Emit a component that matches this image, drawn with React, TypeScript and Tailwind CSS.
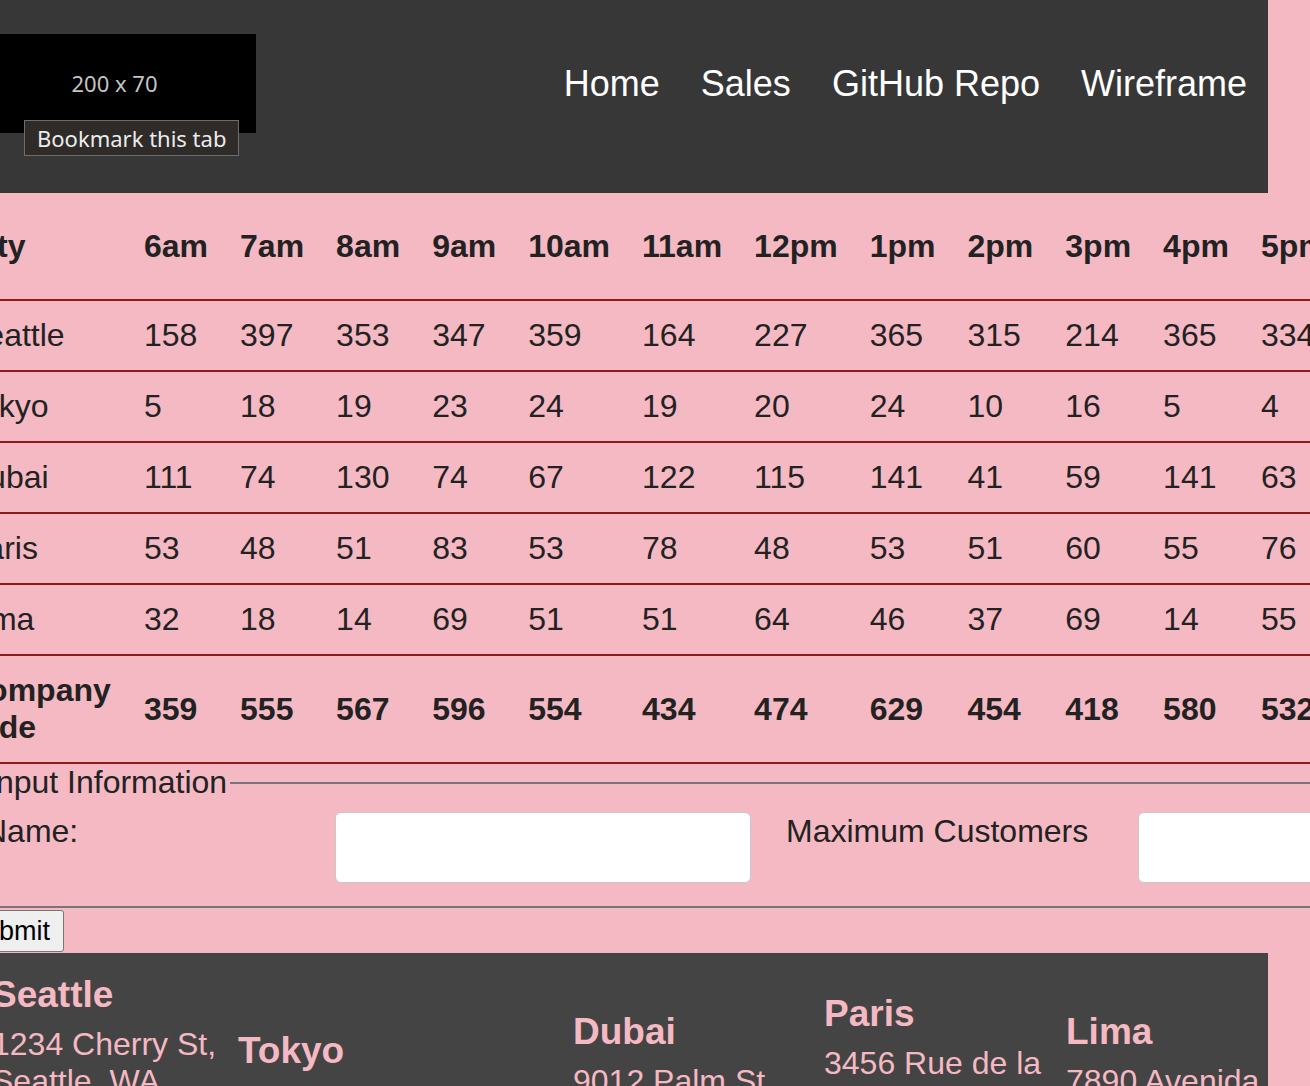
const hours = ["6am", "7am", "8am", "9am", "10am", "11am", "12pm", "1pm", "2pm", "3pm", "4pm", "5pm", "6pm", "7pm"];

const stores = [
  { city: "Seattle", sales: [158, 397, 353, 347, 359, 164, 227, 365, 315, 214, 365, 334, 281, 199] },
  { city: "Tokyo", sales: [5, 18, 19, 23, 24, 19, 20, 24, 10, 16, 5, 4, 12, 21] },
  { city: "Dubai", sales: [111, 74, 130, 74, 67, 122, 115, 141, 41, 59, 141, 63, 88, 97] },
  { city: "Paris", sales: [53, 48, 51, 83, 53, 78, 48, 53, 51, 60, 55, 76, 42, 67] },
  { city: "Lima", sales: [32, 18, 14, 69, 51, 51, 64, 46, 37, 69, 14, 55, 28, 40] },
];

const locations = [
  { city: "Seattle", lines: ["1234 Cherry St,", "Seattle, WA", "98101", "USA"], w: "w-[233px]" },
  { city: "Tokyo", lines: ["5678 Sakura St"], w: "w-[322px]" },
  { city: "Dubai", lines: ["9012 Palm St,", "Dubai, UAE"], w: "w-[238px]" },
  { city: "Paris", lines: ["3456 Rue de la", "Paix, Paris,", "France"], w: "w-[229px]" },
  { city: "Lima", lines: ["7890 Avenida", "Lima"], w: "w-[200px]" },
];

function Header() {
  return (
    <header className="flex items-center justify-between bg-[#373737] pt-[34px] pb-[60px] pl-[33px] pr-[21px]">
      <div className="relative">
        <div className="flex h-[99px] w-[283px] items-center justify-center bg-black font-['Noto_Sans',sans-serif] text-[22px] text-[#c4c4c4]">
          200 x 70
        </div>
        <div className="absolute left-[51px] top-[86px] whitespace-nowrap border border-[#6e6e6e] bg-[#2e2b28] px-[12px] py-[2px] font-['Noto_Sans',sans-serif] text-[22px] leading-[30px] text-[#ececec]">
          Bookmark this tab
        </div>
      </div>
      <nav>
        <ul className="flex gap-[41px] text-[36px] leading-[41px] text-white">
          <li>Home</li>
          <li>Sales</li>
          <li>GitHub Repo</li>
          <li>Wireframe</li>
        </ul>
      </nav>
    </header>
  );
}

function SalesTable() {
  const totals = hours.map((_, i) => stores.reduce((sum, s) => sum + s.sales[i], 0));
  const grand = totals.reduce((a, b) => a + b, 0);
  return (
    <table className="ml-[9px] w-max border-collapse text-left text-[32px] leading-[37px] text-[#222]">
      <thead>
        <tr className="border-b-2 border-[#8e1a1a]">
          <th className="w-[179px] px-[16px] pt-[35px] pb-[34px] font-bold">City</th>
          {hours.map((h) => (
            <th key={h} className="px-[16px] pt-[35px] pb-[34px] font-bold">
              {h}
            </th>
          ))}
          <th className="px-[16px] pt-[35px] pb-[34px] font-bold">Daily Location Total</th>
        </tr>
      </thead>
      <tbody>
        {stores.map((s) => (
          <tr key={s.city} className="border-b-2 border-[#8e1a1a]">
            <td className="p-[16px]">{s.city}</td>
            {s.sales.map((n, i) => (
              <td key={i} className="p-[16px]">
                {n}
              </td>
            ))}
            <td className="p-[16px]">{s.sales.reduce((a, b) => a + b, 0)}</td>
          </tr>
        ))}
        <tr className="border-b-2 border-[#8e1a1a] font-bold">
          <td className="p-[16px]">Company wide</td>
          {totals.map((n, i) => (
            <td key={i} className="p-[16px]">
              {n}
            </td>
          ))}
          <td className="p-[16px]">{grand}</td>
        </tr>
      </tbody>
    </table>
  );
}

function StoreForm() {
  return (
    <form className="text-[32px] leading-[37px] text-[#222]">
      <fieldset className="ml-[30px] w-max border-2 border-[#767676] px-[12px]">
        <legend className="px-[3px]">Input Information</legend>
        <div className="grid grid-cols-[316px_416px_317px_416px] items-start gap-x-[35px] pt-[9px] pb-[23px]">
          <label htmlFor="name" className="pt-[3px]">Name:</label>
          <input id="name" className="mt-[2px] h-[71px] rounded-[6px] border border-[#c9c9c9] bg-white" />
          <label htmlFor="max" className="pt-[3px]">Maximum Customers</label>
          <input id="max" className="mt-[2px] h-[71px] rounded-[6px] border border-[#c9c9c9] bg-white" />
        </div>
      </fieldset>
      <button
        type="button"
        className="ml-[12px] mt-[2px] block h-[42px] rounded-[3px] border border-[#767676] bg-[#efefef] px-[13px] text-[27px] leading-[31px] text-black"
      >
        Submit
      </button>
    </form>
  );
}

function Footer() {
  return (
    <footer className="mt-[1px] flex items-center gap-[13px] bg-[#444444] pl-[52px] pr-[2px] py-[20px] text-[#f4b9c3]">
      {locations.map((l) => (
        <div key={l.city} className={l.w}>
          <h3 className="mb-[10px] text-[37px] font-bold leading-[43px]">{l.city}</h3>
          <p className="text-[32px] leading-[37px]">
            {l.lines.map((line) => (
              <span key={line} className="block">
                {line}
              </span>
            ))}
          </p>
        </div>
      ))}
    </footer>
  );
}

export default function App() {
  return (
    <div className="h-[1086px] w-[1310px] overflow-hidden bg-[#f4b9c3] font-['Liberation_Sans',Arial,sans-serif]">
      <div className="-ml-[60px] w-[1328px]">
        <Header />
        <main>
          <SalesTable />
          <StoreForm />
        </main>
        <Footer />
      </div>
    </div>
  );
}
